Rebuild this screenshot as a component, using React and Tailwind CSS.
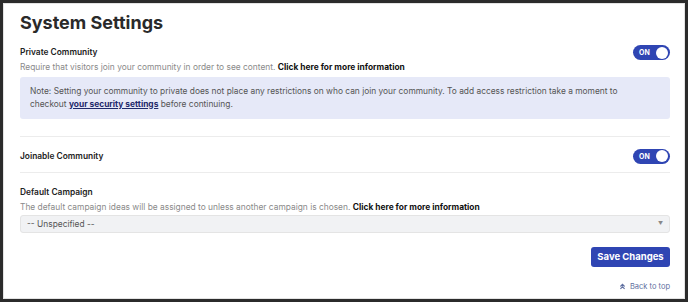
import React, { useState } from 'react';

function Toggle({ on, onClick }) {
  return (
    <button
      type="button"
      onClick={onClick}
      className="flex items-center justify-between w-[37px] h-[15px] rounded-full bg-[#2f45b3] pl-[6px] pr-[2px]"
    >
      <span className="text-[7px] font-bold text-white leading-none">{on ? 'ON' : 'OFF'}</span>
      <span className="w-[12px] h-[12px] rounded-full bg-white" />
    </button>
  );
}

export default function App() {
  const [privateOn, setPrivateOn] = useState(true);
  const [joinableOn, setJoinableOn] = useState(true);

  return (
    <div className="w-[688px] h-[302px] bg-white border-[3px] border-[#2b2b2b] font-['Inter',sans-serif] text-[#222]">
      <div className="h-full border border-[#e3e3e3] pl-[16px] pr-[14px]">
        <h1 className="text-[18px] font-bold leading-none pt-[10px] text-[#2a2a2a]">System Settings</h1>

        <div className="mt-[13px] flex items-center justify-between">
          <h2 className="text-[8.4px] font-semibold">Private Community</h2>
          <Toggle on={privateOn} onClick={() => setPrivateOn(!privateOn)} />
        </div>
        <p className="text-[8.4px] text-[#8a8a8a] mt-[1px]">
          Require that visitors join your community in order to see content.{' '}
          <a href="#" className="font-bold text-[#111]">Click here for more information</a>
        </p>
        <div className="mt-[3px] bg-[#e6e9f8] rounded-[3px] pl-[10px] pr-[50px] py-[8px] text-[8.4px] leading-[13px] text-[#555]">
          Note: Setting your community to private does not place any restrictions on who can join your community. To add access restriction take a moment to checkout{' '}
          <a href="#" className="font-bold text-[#1f2a6b] underline">your security settings</a> before continuing.
        </div>

        <div className="mt-[17px] border-t border-[#ececec]" />
        <div className="flex items-center justify-between pt-[12px] pb-[8px]">
          <h2 className="text-[8.4px] font-semibold">Joinable Community</h2>
          <Toggle on={joinableOn} onClick={() => setJoinableOn(!joinableOn)} />
        </div>
        <div className="border-t border-[#ececec]" />

        <h2 className="text-[8.4px] font-semibold mt-[13px]">Default Campaign</h2>
        <p className="text-[8.4px] text-[#8a8a8a] mt-[3px]">
          The default campaign ideas will be assigned to unless another campaign is chosen.{' '}
          <a href="#" className="font-bold text-[#111]">Click here for more information</a>
        </p>
        <div className="mt-[1px] h-[18px] flex items-center justify-between bg-[#f1f2f4] border border-[#e4e4e4] rounded-[3px] px-[6px] text-[8.4px] text-[#555]">
          <span>-- Unspecified --</span>
          <span className="text-[5px] text-[#888]">▼</span>
        </div>

        <div className="flex justify-end mt-[14px]">
          <button className="h-[20px] w-[79px] rounded-[3px] bg-[#2f45b3] text-white text-[9.5px] font-bold">
            Save Changes
          </button>
        </div>
        <div className="flex justify-end items-center gap-[4px] mt-[14px] text-[7.5px] text-[#5f6fa0]">
          <svg width="7" height="7" viewBox="0 0 10 10" fill="none" stroke="currentColor" strokeWidth="1.6">
            <path d="M2 5 L5 2 L8 5 M2 8.5 L5 5.5 L8 8.5" />
          </svg>
          <span>Back to top</span>
        </div>
      </div>
    </div>
  );
}
